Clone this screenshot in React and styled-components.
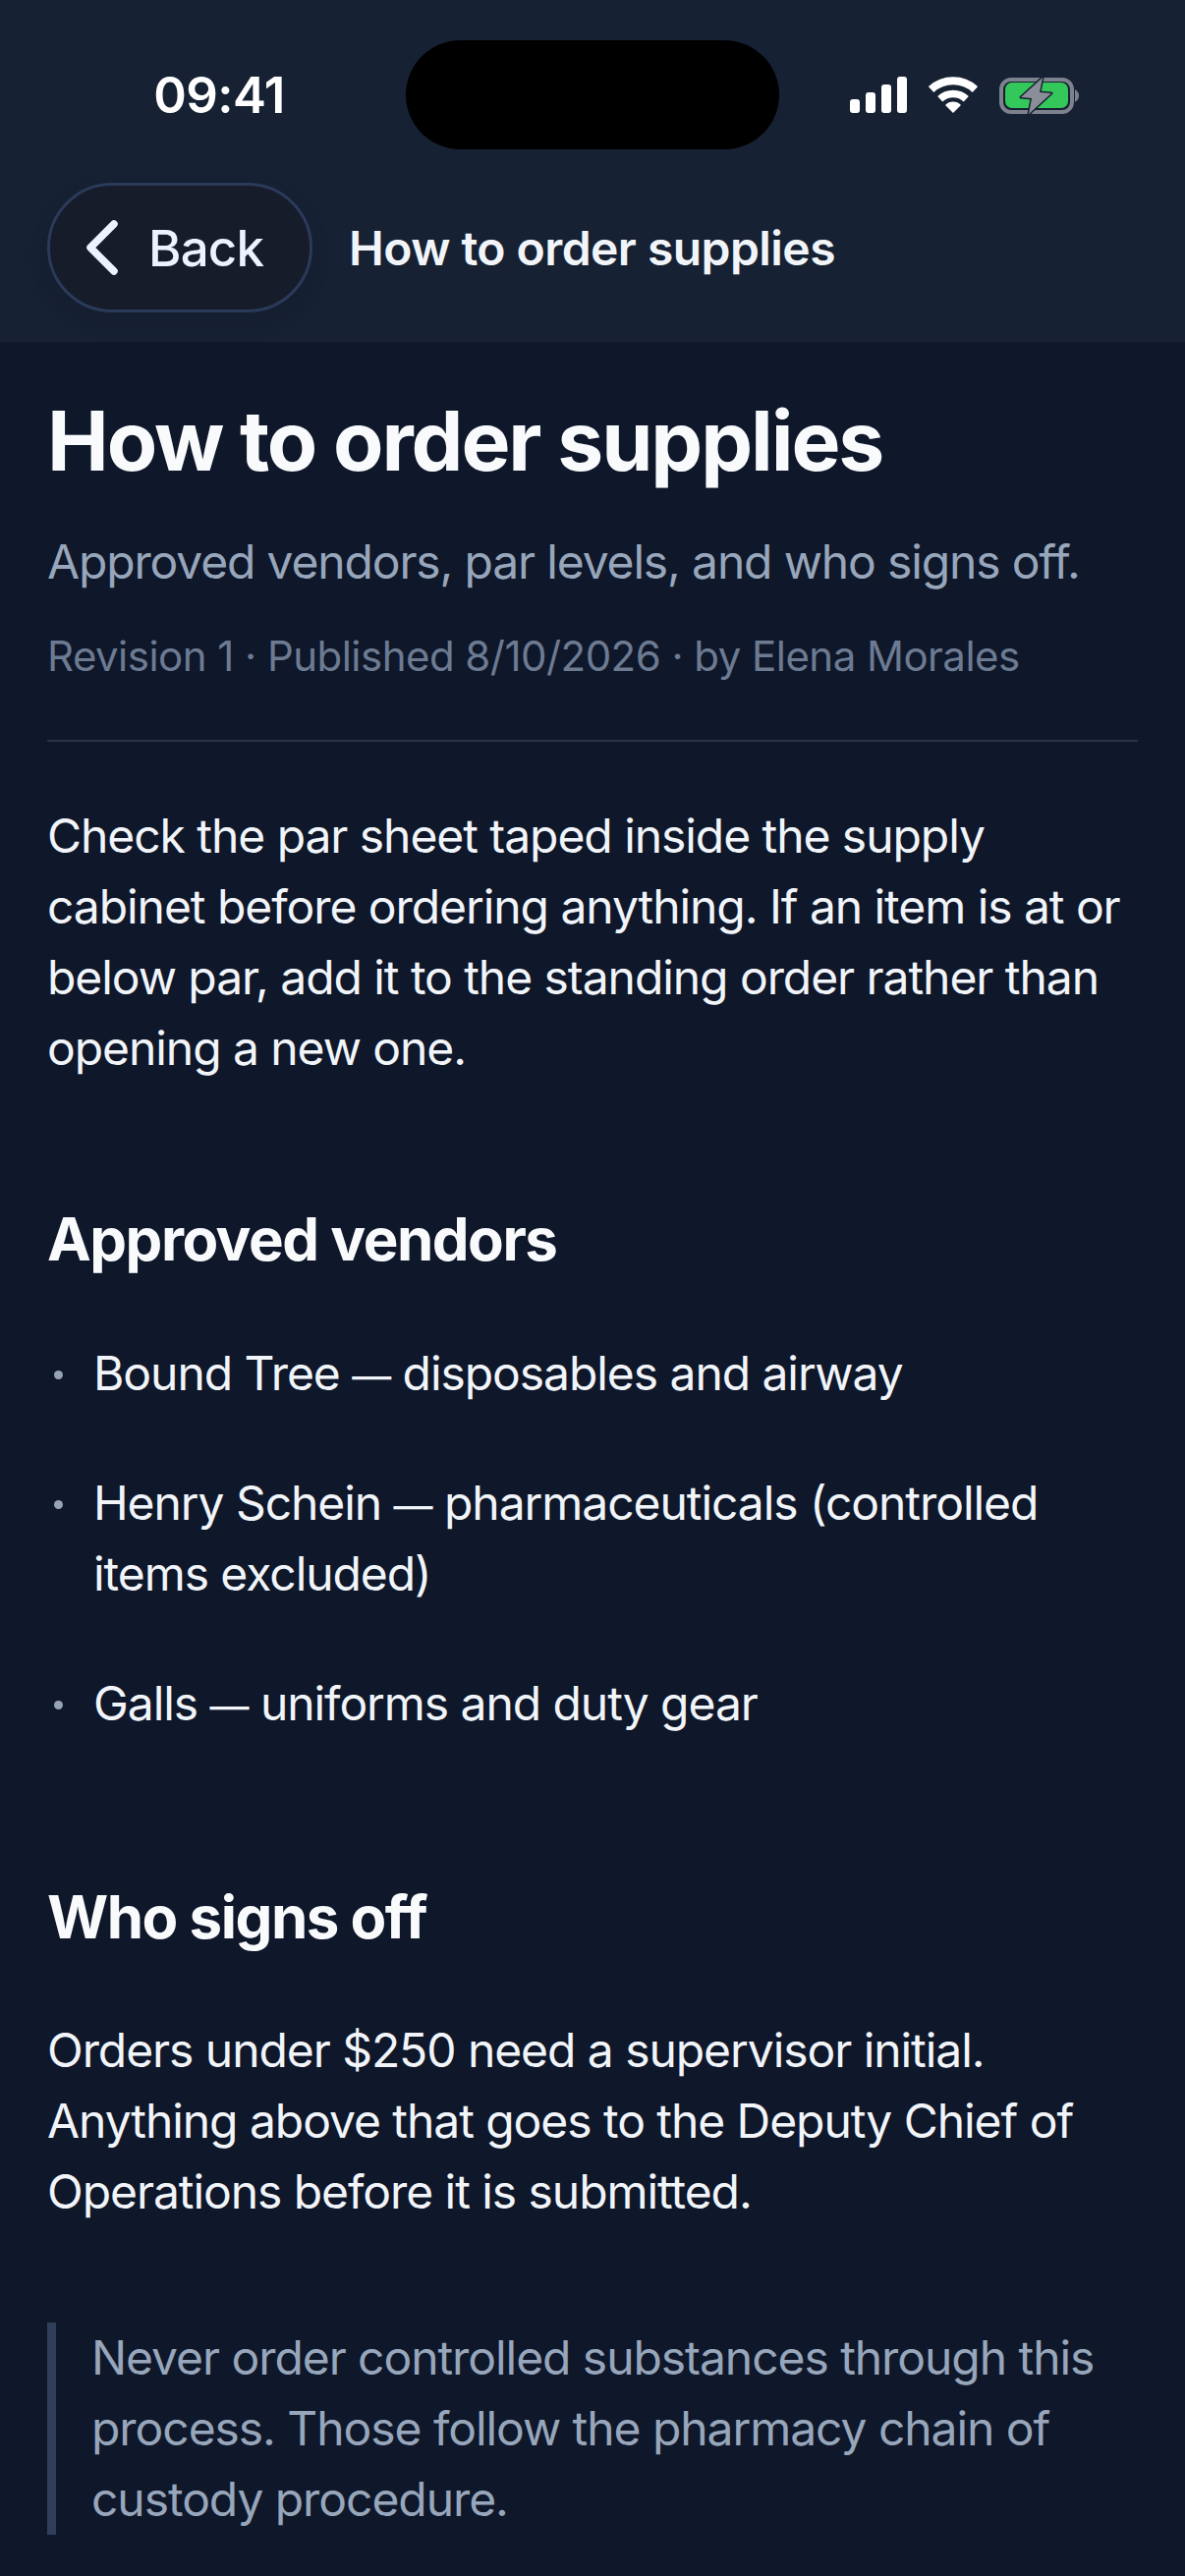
import styled, { createGlobalStyle } from 'styled-components';

const GlobalStyle = createGlobalStyle`
  html, body {
    margin: 0;
    padding: 0;
    background: #0f172a;
  }
  * {
    box-sizing: border-box;
  }
`;

const Page = styled.div`
  width: 1206px;
  height: 2622px;
  overflow: hidden;
  background: #0f172a;
  color: #f1f5f9;
  font-family: Inter, "Liberation Sans", sans-serif;
`;

const Header = styled.header`
  height: 348px;
  background: #162133;
`;

const StatusBar = styled.div`
  display: grid;
  grid-template-columns: 413px 380px 1fr;
  height: 186px;
  padding-top: 41px;
`;

const Time = styled.div`
  height: 111px;
  padding-left: 33px;
  display: flex;
  align-items: center;
  justify-content: center;
  font-size: 51px;
  font-weight: 600;
  letter-spacing: -0.6px;
  color: #fff;
`;

const Island = styled.div`
  height: 111px;
  border-radius: 56px;
  background: #000;
`;

const StatusIcons = styled.div`
  display: flex;
  align-items: flex-start;
  padding: 37px 0 0 72px;
  gap: 22px;
`;

const NavRow = styled.div`
  display: flex;
  align-items: center;
  padding-left: 48px;
  gap: 37px;
`;

const BackButton = styled.button`
  width: 270px;
  height: 132px;
  display: flex;
  align-items: center;
  gap: 30px;
  padding: 0 0 0 36px;
  border: 3px solid #2a3a58;
  border-radius: 66px;
  background: #161c2a;
  box-shadow: 0 9px 18px rgba(15, 23, 42, 0.18);
  color: #eef2ff;
  font-family: inherit;
  font-size: 51px;
  font-weight: 500;
  letter-spacing: -0.8px;
`;

const NavTitle = styled.div`
  font-size: 48px;
  font-weight: 600;
  letter-spacing: -0.56px;
  color: #f1f5f9;
`;

const Main = styled.main`
  padding: 54px 48px 0;
`;

const Title = styled.h1`
  margin: 0;
  font-size: 84px;
  line-height: 94px;
  font-weight: 700;
  letter-spacing: -2.1px;
  color: #f8fafc;
`;

const Subtitle = styled.p`
  margin: 40px 0 0;
  font-size: 48px;
  line-height: 72px;
  font-weight: 380;
  letter-spacing: -1.15px;
  color: #97a6ba;
`;

const Meta = styled.p`
  margin: 30px 0 0;
  font-size: 42px;
  line-height: 60px;
  font-weight: 380;
  letter-spacing: -0.53px;
  color: #6c7b92;
`;

const Divider = styled.hr`
  margin: 55px 0 0;
  border: 0;
  height: 2px;
  background: #263548;
`;

const Body = styled.p`
  margin: ${(p) => p.$top}px 0 0;
  font-size: 48px;
  line-height: 72px;
  font-weight: 380;
  letter-spacing: -1.06px;
  color: #f1f5f9;
`;

const Heading = styled.h2`
  margin: 122px 0 0;
  font-size: 60px;
  line-height: 72px;
  font-weight: 700;
  letter-spacing: -1.5px;
  color: #f8fafc;
`;

const List = styled.ul`
  list-style: none;
  margin: 65px 0 145px;
  padding: 0;
  display: flex;
  flex-direction: column;
  gap: 60px;
`;

const Item = styled.li`
  display: flex;
  font-size: 48px;
  line-height: 72px;
  font-weight: 380;
  letter-spacing: -1.06px;
  color: #f1f5f9;
`;

const Dash = styled.span`
  font-size: 40px;
  line-height: 1;
`;

const Dot = styled.span`
  flex: none;
  width: 9px;
  height: 9px;
  margin: 33px 31px 0 7px;
  border-radius: 50%;
  background: #94a3b8;
`;

const Quote = styled.blockquote`
  margin: 97px 0 0;
  padding-left: 36px;
  border-left: 9px solid #2f3f5a;
  font-size: 48px;
  line-height: 72px;
  font-weight: 380;
  letter-spacing: -1.06px;
  color: #97a6ba;
`;

const SignalIcon = () => (
  <svg width="58" height="37" viewBox="0 0 58 37" fill="#fff">
    <rect x="0" y="23" width="10" height="14" rx="3" />
    <rect x="16" y="16" width="10" height="21" rx="3" />
    <rect x="32" y="8" width="10" height="29" rx="3" />
    <rect x="48" y="0" width="10" height="37" rx="3" />
  </svg>
);

const WifiIcon = () => (
  <svg width="50" height="37" viewBox="0 0 50 37" fill="none" stroke="#fff">
    <path d="M2.6 13 A33 33 0 0 1 47.4 13" strokeWidth="8" />
    <path d="M11.7 22.8 A19.5 19.5 0 0 1 38.3 22.8" strokeWidth="7.5" />
    <path d="M17 29 L25 37 L33 29 A11 11 0 0 0 17 29 Z" fill="#fff" stroke="none" />
  </svg>
);

const BatteryIcon = () => (
  <svg width="81" height="39" viewBox="0 0 81 39">
    <rect x="2" y="3" width="72" height="33" rx="10" fill="none" stroke="#7d828d" strokeWidth="4" />
    <rect x="6" y="6" width="64" height="26" rx="7" fill="#34c759" />
    <path d="M77 13 C80 15 81 17 81 19.5 C81 22 80 24 77 26 Z" fill="#7d828d" />
    <path d="M44 1 L22 21 L33 22 L30 38 L53 17 L41 16 Z" fill="#8a8e98" stroke="#162133" strokeWidth="3" strokeLinejoin="round" paintOrder="stroke" />
  </svg>
);

const BackChevron = () => (
  <svg width="34" height="62" viewBox="0 0 34 62" fill="none" stroke="#eef2ff" strokeWidth="7.5" strokeLinecap="round" strokeLinejoin="round">
    <path d="M29 7 L5 31 L29 55" />
  </svg>
);

export default function App() {
  return (
    <Page>
      <GlobalStyle />
      <Header>
        <StatusBar>
          <Time>09:41</Time>
          <Island />
          <StatusIcons>
            <SignalIcon />
            <WifiIcon />
            <BatteryIcon />
          </StatusIcons>
        </StatusBar>
        <NavRow>
          <BackButton>
            <BackChevron />
            Back
          </BackButton>
          <NavTitle>How to order supplies</NavTitle>
        </NavRow>
      </Header>
      <Main>
        <Title>How to order supplies</Title>
        <Subtitle>Approved vendors, par levels, and who signs off.</Subtitle>
        <Meta>Revision 1 · Published 8/10/2026 · by Elena Morales</Meta>
        <Divider />
        <Body $top={60}>
          Check the par sheet taped inside the supply cabinet before ordering anything. If an item is at or below par, add it to the standing order rather than opening a new one.
        </Body>
        <Heading>Approved vendors</Heading>
        <List>
          <Item><Dot /><span>Bound Tree <Dash>—</Dash> disposables and airway</span></Item>
          <Item><Dot /><span>Henry Schein <Dash>—</Dash> pharmaceuticals (controlled items excluded)</span></Item>
          <Item><Dot /><span>Galls <Dash>—</Dash> uniforms and duty gear</span></Item>
        </List>
        <Heading>Who signs off</Heading>
        <Body $top={64}>
          Orders under $250 need a supervisor initial. Anything above that goes to the Deputy Chief of Operations before it is submitted.
        </Body>
        <Quote>
          Never order controlled substances through this process. Those follow the pharmacy chain of custody procedure.
        </Quote>
      </Main>
    </Page>
  );
}
